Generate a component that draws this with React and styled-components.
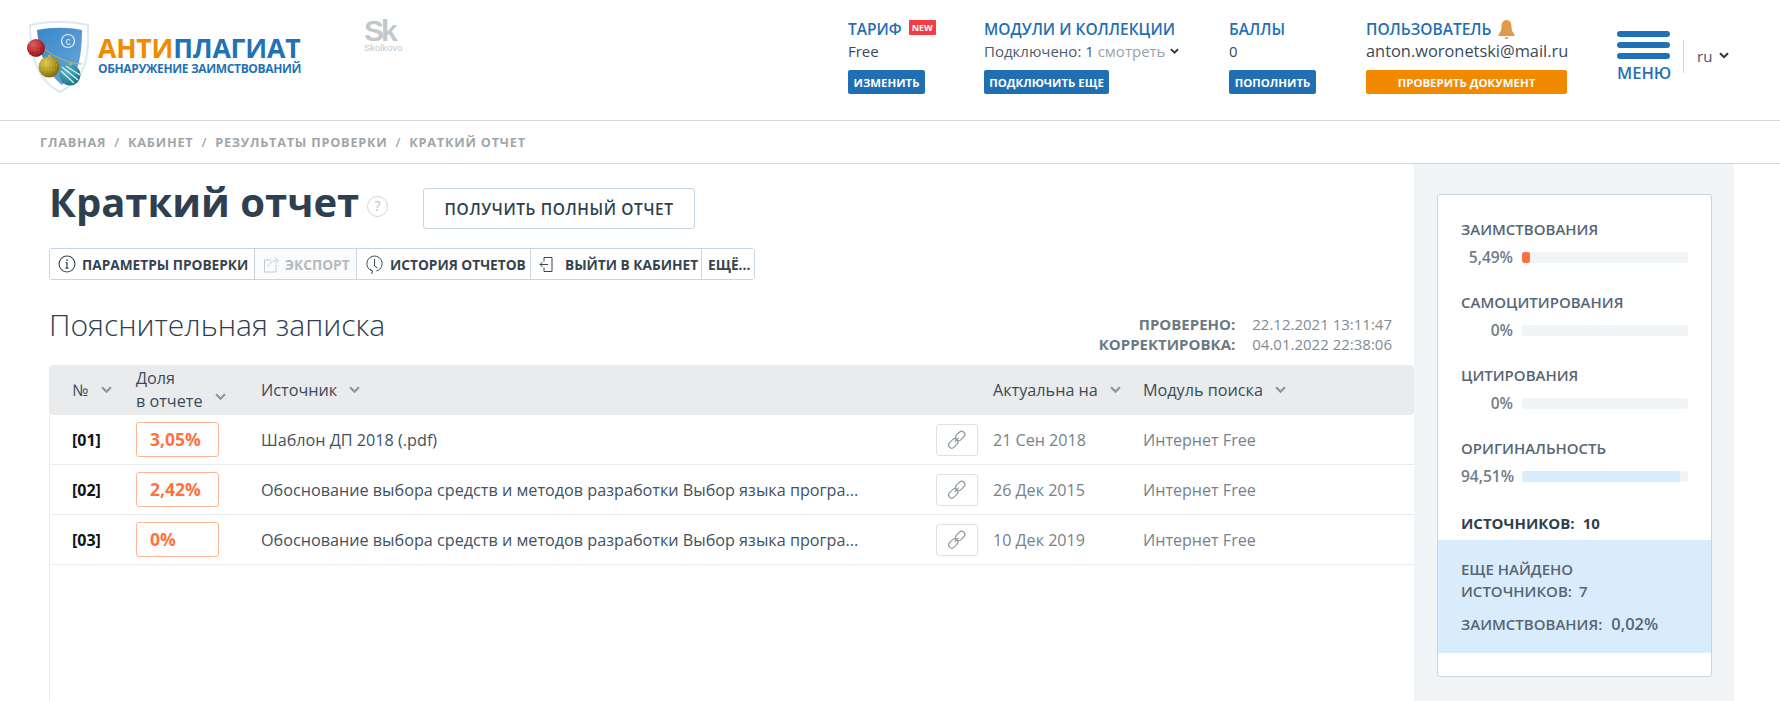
import React from 'react';
import styled, { createGlobalStyle } from 'styled-components';

const GlobalStyle = createGlobalStyle`
  html, body {
    margin: 0;
    padding: 0;
    background: #fff;
    font-family: 'Open Sans', 'Noto Sans', sans-serif;
    color: #2e3f4e;
  }
  * { box-sizing: border-box; }
`;

const Page = styled.div`
  width: 1780px;
  height: 701px;
  overflow: hidden;
  background: #fff;
`;

const Header = styled.header`
  height: 121px;
  border-bottom: 1px solid #d9d9d9;
  display: flex;
`;

const LogoBlock = styled.div`
  display: flex;
  width: 848px;
  padding: 19px 0 0 26px;
`;

const LogoWords = styled.div`
  margin: 16px 0 0 4px;
  width: 208px;
`;

const LogoTitle = styled.div`
  font-size: 26.6px;
  line-height: 27px;
  font-weight: 700;
  letter-spacing: -0.2px;
  color: #1f72b6;
  white-space: nowrap;
  span { color: #f18a00; }
`;

const LogoSub = styled.div`
  font-size: 12px;
  line-height: 12px;
  margin-top: 1px;
  font-weight: 700;
  letter-spacing: -0.35px;
  color: #1f72b6;
  white-space: nowrap;
`;

const Skolkovo = styled.div`
  margin: 0 0 0 58px;
  width: 44px;
  color: #c3c8cc;
  font-family: 'Liberation Sans', sans-serif;
`;

const SkMark = styled.div`
  font-size: 30px;
  line-height: 23px;
  font-weight: 700;
  letter-spacing: -3px;
`;

const SkName = styled.div`
  font-size: 9.5px;
  line-height: 9px;
  margin-top: 1px;
`;

const InfoCol = styled.div`
  width: ${({ $w }) => $w}px;
  padding-top: 19px;
  flex: none;
`;

const InfoTitle = styled.div`
  display: flex;
  align-items: center;
  gap: 7px;
  height: 20px;
  font-size: 15.5px;
  font-weight: 600;
  color: #1f6fb2;
  white-space: nowrap;
`;

const NewBadge = styled.span`
  background: #f33c43;
  color: #fff;
  font-size: 9px;
  font-weight: 700;
  line-height: 15px;
  height: 15px;
  padding: 0 3px;
  margin-top: -3px;
  border-radius: 1px;
`;

const InfoValue = styled.div`
  font-size: ${({ $size }) => $size ?? 15}px;
  line-height: 20px;
  height: 20px;
  margin: 2px 0 9px;
  color: ${({ $muted }) => ($muted ? '#4b5b68' : '#3a4a58')};
  white-space: nowrap;
  display: flex;
  align-items: center;
  gap: 5px;
  span { color: #98a2ab; }
`;

const SmallBtn = styled.div`
  height: 24px;
  width: ${({ $w }) => $w}px;
  border-radius: 2px;
  background: ${({ $orange }) => ($orange ? '#f18a00' : '#1f6fb2')};
  color: #fff;
  font-size: 11.4px;
  font-weight: 700;
  display: flex;
  align-items: center;
  justify-content: center;
  white-space: nowrap;
`;

const MenuBlock = styled.div`
  width: 67px;
  flex: none;
  padding: 31px 0 0 1px;
  display: flex;
  flex-direction: column;
  align-items: flex-start;
`;

const Burger = styled.div`
  width: 53px;
  height: 6px;
  border-radius: 3px;
  background: #1f72b6;
  margin-bottom: 5px;
`;

const MenuLabel = styled.div`
  font-size: 16.5px;
  line-height: 18px;
  font-weight: 600;
  color: #1f72b6;
`;

const LangBlock = styled.div`
  margin-top: 40px;
  height: 33px;
  border-left: 1px solid #cfd6dc;
  padding: 0 0 2px 13px;
  display: flex;
  align-items: center;
  gap: 7px;
  font-size: 15px;
  color: #4b5068;
`;

const Crumbs = styled.nav`
  height: 43px;
  padding-left: 40px;
  border-bottom: 1px solid #d9d9d9;
  display: flex;
  align-items: center;
  gap: 8px;
  font-size: 12.7px;
  font-weight: 700;
  letter-spacing: 0.78px;
  color: #9fa6ab;
  white-space: nowrap;
`;

const CrumbSep = styled.i`
  font-style: normal;
  font-weight: 600;
`;

const Body = styled.div`
  display: flex;
  height: 537px;
`;

const Main = styled.main`
  width: 1414px;
  flex: none;
  padding-left: 49px;
`;

const TitleRow = styled.div`
  display: flex;
  align-items: flex-start;
  height: 76px;
`;

const Title = styled.h1`
  margin: 13px 0 0;
  font-size: 40px;
  line-height: 50px;
  font-weight: 700;
  color: #2e4050;
  white-space: nowrap;
`;

const HelpMark = styled.span`
  width: 21px;
  height: 21px;
  margin: 32px 35px 0 8px;
  border: 1.5px solid #cfd3d6;
  border-radius: 50%;
  color: #bcc2c6;
  font-size: 14px;
  line-height: 18px;
  text-align: center;
  flex: none;
`;

const ReportBtn = styled.div`
  width: 272px;
  height: 41px;
  margin-top: 24px;
  border: 1px solid #c5d5e4;
  border-radius: 3px;
  display: flex;
  align-items: center;
  justify-content: center;
  font-size: 15.5px;
  font-weight: 600;
  letter-spacing: 0.6px;
  color: #2e3f4e;
`;

const Toolbar = styled.div`
  display: flex;
  width: fit-content;
  height: 32px;
  margin-top: 8px;
  border: 1px solid #c5d5e4;
  border-radius: 3px;
`;

const ToolBtn = styled.div`
  width: ${({ $w }) => $w}px;
  flex: none;
  display: flex;
  align-items: center;
  gap: ${({ $gap }) => $gap ?? 6}px;
  padding-left: ${({ $pad }) => $pad ?? 8}px;
  font-size: 13.7px;
  font-weight: 700;
  white-space: nowrap;
  color: ${({ $off }) => ($off ? '#b3bac0' : '#35434f')};
  background: ${({ $off }) => ($off ? '#fafbfc' : '#fff')};
  & + & { border-left: 1px solid #c5d5e4; }
`;

const NoteRow = styled.div`
  display: flex;
  justify-content: space-between;
  height: 85px;
  padding-right: 22px;
`;

const NoteTitle = styled.h2`
  margin: 25px 0 0;
  font-size: 30px;
  line-height: 40px;
  font-weight: 300;
  color: #2e4050;
`;

const Dates = styled.div`
  display: grid;
  grid-template-columns: auto auto;
  column-gap: 17px;
  align-content: start;
  font-size: 15px;
  line-height: 20px;
  padding-top: 34px;
`;

const DateLabel = styled.b`
  font-weight: 700;
  color: #6b7883;
  text-align: right;
`;

const DateValue = styled.span`
  color: #808b95;
  text-align: right;
`;

const THead = styled.div`
  height: 50px;
  background: #e9ebed;
  border-radius: 4px;
  display: grid;
  grid-template-columns: 87px 125px 732px 150px 1fr;
  align-items: center;
  font-size: 16.2px;
  color: #3c4a57;
`;

const HeadCell = styled.div`
  display: flex;
  align-items: ${({ $end }) => ($end ? 'flex-end' : 'center')};
  gap: ${({ $gap }) => $gap ?? 12}px;
  padding-left: ${({ $pad }) => $pad ?? 0}px;
  line-height: 23px;
  white-space: nowrap;
`;

const LowChevron = styled.div`
  padding-bottom: 6px;
`;

const Rows = styled.div`
  border-left: 1px solid #e8eaec;
  height: 300px;
`;

const Row = styled.div`
  height: 50px;
  margin-left: 1px;
  border-bottom: 1px solid #e8eaec;
  display: grid;
  grid-template-columns: 85px 125px 675px 57px 150px 1fr;
  align-items: center;
  white-space: nowrap;
`;

const RowNum = styled.div`
  padding-left: 21px;
  font-weight: 700;
  color: #101418;
  font-size: 16px;
`;

const Share = styled.div`
  width: 83px;
  height: 35px;
  border: 1px solid #fdb595;
  border-radius: 3px;
  padding-left: 13px;
  line-height: 32px;
  font-size: 17.5px;
  font-weight: 700;
  color: #ff7140;
`;

const Source = styled.div`
  color: #42525f;
  font-size: 16.2px;
`;

const LinkBtn = styled.div`
  width: 42px;
  height: 32px;
  border: 1px solid #dbe3ea;
  border-radius: 3px;
  display: flex;
  align-items: center;
  justify-content: center;
`;

const Muted = styled.div`
  color: #76828c;
  font-size: 16.1px;
`;

const Aside = styled.aside`
  width: 320px;
  flex: none;
  height: 537px;
  background: #f1f5f8;
  padding: 30px 0 0 23px;
`;

const Card = styled.div`
  width: 275px;
  height: 483px;
  background: #fff;
  border: 1px solid #c5d5e4;
  border-radius: 3px;
  padding-top: 24px;
  overflow: hidden;
`;

const Stat = styled.div`
  height: 73px;
  padding-left: 23px;
`;

const StatName = styled.div`
  font-size: 15px;
  line-height: 20px;
  font-weight: 600;
  color: #566674;
`;

const StatLine = styled.div`
  display: flex;
  align-items: center;
  margin-top: 8px;
  height: 20px;
`;

const StatValue = styled.div`
  width: 52px;
  text-align: right;
  font-size: 15.5px;
  font-weight: 600;
  color: #6f7c87;
`;

const Bar = styled.div`
  width: 166px;
  height: 11px;
  margin-left: 9px;
  border-radius: 2px;
  background: #f1f5f8;
  overflow: hidden;
`;

const BarFill = styled.div`
  height: 100%;
  border-radius: 2px;
  background: ${({ $color }) => $color};
`;

const SourcesLine = styled.div`
  padding: 2px 0 0 23px;
  font-size: 15px;
  line-height: 20px;
  font-weight: 700;
  color: #2e3f4e;
  height: 29px;
  span { margin-left: 8px; }
`;

const Found = styled.div`
  height: 113px;
  background: #d9ecfb;
  padding: 18px 0 0 23px;
  font-size: 15px;
  font-weight: 600;
  line-height: 22px;
  color: #566674;
  span { margin-left: 7px; }
`;

const FoundLast = styled.div`
  margin-top: 11px;
  span { font-size: 16.4px; margin-left: 9px; }
`;

const Chevron = ({ size = 11, color = '#8a949d', width = 2 }) => (
  <svg width={size} height={size * 0.7} viewBox="0 0 10 7" fill="none">
    <path d="M1 1.2 5 5.2 9 1.2" stroke={color} strokeWidth={width} />
  </svg>
);

const LogoShield = () => (
  <svg width="68" height="76" viewBox="0 0 68 76">
    <defs>
      <linearGradient id="shieldBlue" x1="0" y1="0" x2="1" y2="1">
        <stop offset="0" stopColor="#3a86c8" />
        <stop offset="1" stopColor="#6aa9dc" />
      </linearGradient>
      <radialGradient id="ballRed" cx=".35" cy=".3" r=".8">
        <stop offset="0" stopColor="#d9605c" />
        <stop offset=".6" stopColor="#b2252b" />
        <stop offset="1" stopColor="#7c1a1e" />
      </radialGradient>
      <radialGradient id="ballGold" cx=".35" cy=".3" r=".8">
        <stop offset="0" stopColor="#dccb55" />
        <stop offset=".6" stopColor="#a98f18" />
        <stop offset="1" stopColor="#6d5c10" />
      </radialGradient>
      <radialGradient id="ballTeal" cx=".35" cy=".3" r=".8">
        <stop offset="0" stopColor="#58b9c6" />
        <stop offset="1" stopColor="#136c80" />
      </radialGradient>
    </defs>
    <path d="M4 6C20 2 46 2 62 6 63 32 63 58 34 73 13 63 4 40 4 6Z" fill="#fff" stroke="#dbe9f4" strokeWidth="2" />
    <path d="M11 11C26 8 42 8 56 11 56 32 53 46 51 49 47 56 41 62 36 66 22 54 14 40 11 11Z" fill="url(#shieldBlue)" />
    <circle cx="42" cy="22" r="6.5" fill="none" stroke="#e4f0f9" strokeWidth="1.2" />
    <text x="42" y="25.5" fontSize="10" textAnchor="middle" fill="#e4f0f9" fontFamily="Liberation Sans">c</text>
    <path d="M12 22C18 32 28 37 36 40 42 43 50 45 56 45" fill="none" stroke="#c3ae52" strokeWidth="1" />
    <circle cx="10" cy="29" r="9" fill="url(#ballRed)" />
    <path d="M4 27h12M5 31h10M9 22v14M13 23v12" stroke="#d9605c" strokeWidth=".7" strokeDasharray="1 1.5" />
    <circle cx="23" cy="48" r="10.5" fill="url(#ballGold)" />
    <path d="M15 46h16M16 51h14" stroke="#d8c75e" strokeWidth=".7" strokeDasharray="1 2" />
    <rect x="22" y="36" width="3" height="2.5" fill="#c3ae52" />
    <circle cx="44" cy="56" r="10.5" fill="url(#ballTeal)" />
    <rect x="43" y="44" width="3" height="2.5" fill="#c3ae52" />
    <path d="M35 52 48 64M36 48 52 61M40 47 54 56" stroke="#d6edf0" strokeWidth="1.4" />
  </svg>
);

const Bell = () => (
  <svg width="17" height="21" viewBox="0 0 17 21">
    <path d="M8.5 1C12 1 13.5 4 13.5 7.5 13.5 11 14.5 13 16.5 15.5L16.5 17 .5 17 .5 15.5C2.5 13 3.5 11 3.5 7.5 3.5 4 5 1 8.5 1Z" fill="#e39a48" />
    <path d="M6 18.2h5L8.5 20.5Z" fill="#e39a48" />
  </svg>
);

const InfoIcon = () => (
  <svg width="18" height="18" viewBox="0 0 17 17" fill="none" stroke="#3a4650">
    <circle cx="8.5" cy="8.5" r="7.5" />
    <path d="M8.5 7.2v5M7 12.5h3M7.2 7.2h1.3" strokeWidth="1.2" />
    <circle cx="8.5" cy="4.8" r=".8" fill="#3a4650" stroke="none" />
  </svg>
);

const ExportIcon = () => (
  <svg width="17" height="17" viewBox="0 0 17 17" fill="none" stroke="#c4cacf">
    <path d="M8 4H1.5v12H13V9" />
    <path d="M5 11C6 7 9 5 14 4.5M11.5 1.5 15.5 4.5 12.5 8" />
  </svg>
);

const HistoryIcon = () => (
  <svg width="17" height="21" viewBox="0 0 17 21" fill="none" stroke="#3a4650">
    <path d="M6.5 17A7.6 7.6 0 1 1 10.5 17" />
    <path d="M8.5 5v7l3 2" />
    <path d="M4 15 6.5 17.2 5.5 20" />
  </svg>
);

const ExitIcon = () => (
  <svg width="16" height="17" viewBox="0 0 16 17" fill="none" stroke="#3a4650">
    <path d="M5 5.5v-4h8v14H5v-4" />
    <path d="M9 8.5H1M3.5 6 1 8.5 3.5 11" />
  </svg>
);

const LinkIcon = () => (
  <svg width="22" height="22" viewBox="0 0 19 19" fill="none" stroke="#8f9aa3" strokeWidth="1">
    <rect x="9.5" y="1.5" width="5.5" height="9" rx="2.75" transform="rotate(45 12.25 6)" />
    <rect x="3.5" y="8" width="5.5" height="9" rx="2.75" transform="rotate(45 6.25 12.5)" />
    <path d="M7.6 11 11 7.6" />
  </svg>
);

const rows = [
  { num: '[01]', share: '3,05%', source: 'Шаблон ДП 2018 (.pdf)', date: '21 Сен 2018' },
  { num: '[02]', share: '2,42%', source: 'Обоснование выбора средств и методов разработки Выбор языка програ...', date: '26 Дек 2015' },
  { num: '[03]', share: '0%', source: 'Обоснование выбора средств и методов разработки Выбор языка програ...', date: '10 Дек 2019' },
];

const stats = [
  { name: 'ЗАИМСТВОВАНИЯ', value: '5,49%', fill: 5, color: '#ff7140' },
  { name: 'САМОЦИТИРОВАНИЯ', value: '0%', fill: 0, color: '#ff7140' },
  { name: 'ЦИТИРОВАНИЯ', value: '0%', fill: 0, color: '#ff7140' },
  { name: 'ОРИГИНАЛЬНОСТЬ', value: '94,51%', fill: 95, color: '#d9ecfb' },
];

export default function App() {
  return (
    <Page>
      <GlobalStyle />
      <Header>
        <LogoBlock>
          <LogoShield />
          <LogoWords>
            <LogoTitle><span>АНТИ</span>ПЛАГИАТ</LogoTitle>
            <LogoSub>ОБНАРУЖЕНИЕ ЗАИМСТВОВАНИЙ</LogoSub>
          </LogoWords>
          <Skolkovo>
            <SkMark>Sk</SkMark>
            <SkName>Skolkovo</SkName>
          </Skolkovo>
        </LogoBlock>
        <InfoCol $w={136}>
          <InfoTitle>ТАРИФ <NewBadge>NEW</NewBadge></InfoTitle>
          <InfoValue>Free</InfoValue>
          <SmallBtn $w={77}>ИЗМЕНИТЬ</SmallBtn>
        </InfoCol>
        <InfoCol $w={245}>
          <InfoTitle>МОДУЛИ И КОЛЛЕКЦИИ</InfoTitle>
          <InfoValue $muted>
            <div>Подключено: 1 <span>смотреть</span></div>
            <Chevron size={9} color="#333" />
          </InfoValue>
          <SmallBtn $w={125}>ПОДКЛЮЧИТЬ ЕЩЕ</SmallBtn>
        </InfoCol>
        <InfoCol $w={137}>
          <InfoTitle>БАЛЛЫ</InfoTitle>
          <InfoValue>0</InfoValue>
          <SmallBtn $w={87}>ПОПОЛНИТЬ</SmallBtn>
        </InfoCol>
        <InfoCol $w={250}>
          <InfoTitle>ПОЛЬЗОВАТЕЛЬ <Bell /></InfoTitle>
          <InfoValue $size={16.4}>anton.woronetski@mail.ru</InfoValue>
          <SmallBtn $w={201} $orange>ПРОВЕРИТЬ ДОКУМЕНТ</SmallBtn>
        </InfoCol>
        <MenuBlock>
          <Burger />
          <Burger />
          <Burger />
          <MenuLabel>МЕНЮ</MenuLabel>
        </MenuBlock>
        <LangBlock>ru <Chevron size={10} color="#333" /></LangBlock>
      </Header>

      <Crumbs>
        <span>ГЛАВНАЯ</span><CrumbSep>/</CrumbSep>
        <span>КАБИНЕТ</span><CrumbSep>/</CrumbSep>
        <span>РЕЗУЛЬТАТЫ ПРОВЕРКИ</span><CrumbSep>/</CrumbSep>
        <span>КРАТКИЙ ОТЧЕТ</span>
      </Crumbs>

      <Body>
        <Main>
          <TitleRow>
            <Title>Краткий отчет</Title>
            <HelpMark>?</HelpMark>
            <ReportBtn>ПОЛУЧИТЬ ПОЛНЫЙ ОТЧЕТ</ReportBtn>
          </TitleRow>
          <Toolbar>
            <ToolBtn $w={204}><InfoIcon />ПАРАМЕТРЫ ПРОВЕРКИ</ToolBtn>
            <ToolBtn $w={102} $off $gap={5}><ExportIcon />ЭКСПОРТ</ToolBtn>
            <ToolBtn $w={174} $pad={9} $gap={7}><HistoryIcon />ИСТОРИЯ ОТЧЕТОВ</ToolBtn>
            <ToolBtn $w={171} $gap={10}><ExitIcon />ВЫЙТИ В КАБИНЕТ</ToolBtn>
            <ToolBtn $w={53} $pad={6}>ЕЩЁ...</ToolBtn>
          </Toolbar>
          <NoteRow>
            <NoteTitle>Пояснительная записка</NoteTitle>
            <Dates>
              <DateLabel>ПРОВЕРЕНО:</DateLabel><DateValue>22.12.2021 13:11:47</DateValue>
              <DateLabel>КОРРЕКТИРОВКА:</DateLabel><DateValue>04.01.2022 22:38:06</DateValue>
            </Dates>
          </NoteRow>
          <THead>
            <HeadCell $pad={23}>№ <Chevron /></HeadCell>
            <HeadCell $end $gap={13}>
              <div>Доля<br />в отчете</div>
              <LowChevron><Chevron /></LowChevron>
            </HeadCell>
            <HeadCell>Источник <Chevron /></HeadCell>
            <HeadCell>Актуальна на <Chevron /></HeadCell>
            <HeadCell>Модуль поиска <Chevron /></HeadCell>
          </THead>
          <Rows>
            {rows.map((row) => (
              <Row key={row.num}>
                <RowNum>{row.num}</RowNum>
                <Share>{row.share}</Share>
                <Source>{row.source}</Source>
                <LinkBtn><LinkIcon /></LinkBtn>
                <Muted>{row.date}</Muted>
                <Muted>Интернет Free</Muted>
              </Row>
            ))}
          </Rows>
        </Main>
        <Aside>
          <Card>
            {stats.map((stat) => (
              <Stat key={stat.name}>
                <StatName>{stat.name}</StatName>
                <StatLine>
                  <StatValue>{stat.value}</StatValue>
                  <Bar>
                    <BarFill $color={stat.color} style={{ width: `${stat.fill}%` }} />
                  </Bar>
                </StatLine>
              </Stat>
            ))}
            <SourcesLine>ИСТОЧНИКОВ:<span>10</span></SourcesLine>
            <Found>
              ЕЩЕ НАЙДЕНО<br />
              ИСТОЧНИКОВ:<span>7</span>
              <FoundLast>ЗАИМСТВОВАНИЯ:<span>0,02%</span></FoundLast>
            </Found>
          </Card>
        </Aside>
      </Body>
    </Page>
  );
}
